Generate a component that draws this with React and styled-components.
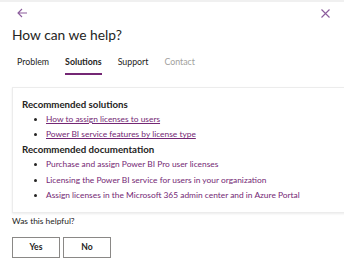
import React from "react"
import styled, { createGlobalStyle } from "styled-components"

const GlobalStyle = createGlobalStyle`
  body {
    margin: 0;
    background: #fff;
    font-family: Lato, "Open Sans", sans-serif;
    color: #252423;
  }
`

const tabs = [
  { label: "Problem" },
  { label: "Solutions", active: true },
  { label: "Support" },
  { label: "Contact", disabled: true },
]

const solutions = [
  "How to assign licenses to users",
  "Power BI service features by license type",
]

const docs = [
  "Purchase and assign Power BI Pro user licenses",
  "Licensing the Power BI service for users in your organization",
  "Assign licenses in the Microsoft 365 admin center and in Azure Portal",
]

const App = () => {
  return (
    <>
      <GlobalStyle />
      <Panel>
        <TopBar>
          <IconButton aria-label="back">
            <svg width="11" height="10" viewBox="0 0 11 10" fill="none">
              <path d="M5 1 L1 5 L5 9 M1 5 H10" stroke="#8b5c9c" strokeWidth="1.1" />
            </svg>
          </IconButton>
          <IconButton aria-label="close">
            <svg width="9" height="9" viewBox="0 0 9 9" fill="none">
              <path d="M0.5 0.5 L8.5 8.5 M8.5 0.5 L0.5 8.5" stroke="#8b5c9c" strokeWidth="1.1" />
            </svg>
          </IconButton>
        </TopBar>
        <Title>How can we help?</Title>
        <Tabs>
          {tabs.map((t) => (
            <Tab key={t.label} $active={t.active} $disabled={t.disabled}>
              {t.label}
            </Tab>
          ))}
        </Tabs>
        <Card>
          <Heading>Recommended solutions</Heading>
          <List>
            {solutions.map((s) => (
              <Item key={s}>
                <Link href="#" $underline>{s}</Link>
              </Item>
            ))}
          </List>
          <Heading>Recommended documentation</Heading>
          <List>
            {docs.map((s) => (
              <Item key={s} $tall>
                <Link href="#">{s}</Link>
              </Item>
            ))}
          </List>
        </Card>
        <Question>Was this helpful?</Question>
        <Buttons>
          <Button>Yes</Button>
          <Button>No</Button>
        </Buttons>
      </Panel>
    </>
  )
}

const Panel = styled.div`
  border-top: 2px solid #f0f0f0;
  padding: 4px 0 0 12px;
  overflow: hidden;
`

const TopBar = styled.div`
  display: flex;
  justify-content: space-between;
  align-items: center;
  padding: 0 14px 0 5px;
  height: 14px;
`

const IconButton = styled.span`
  display: flex;
  align-items: center;
`

const Title = styled.h1`
  margin: 5px 0 0;
  font-size: 13.8px;
  font-weight: 400;
  line-height: 20px;
`

const Tabs = styled.div`
  display: flex;
  gap: 16px;
  margin: 8px 0 0 5px;
`

const Tab = styled.div`
  font-size: 8.8px;
  line-height: 18px;
  padding-bottom: 2px;
  color: ${(p) => (p.$disabled ? "#a19f9d" : "#252423")};
  font-weight: ${(p) => (p.$active ? 700 : 400)};
  border-bottom: 2px solid ${(p) => (p.$active ? "#742774" : "transparent")};
`

const Card = styled.div`
  margin-top: 12px;
  margin-right: -20px;
  padding: 9px 10px 8px 9px;
  border: 1px solid #ececec;
  box-shadow: 0 1px 2px rgba(0, 0, 0, 0.08);
`

const Heading = styled.div`
  font-size: 9.7px;
  font-weight: 700;
  line-height: 15px;
`

const List = styled.ul`
  margin: 0;
  padding-left: 24px;
`

const Item = styled.li`
  line-height: ${(p) => (p.$tall ? "15.5px" : "15px")};
  font-size: 8.4px;

  &::marker {
    color: #252423;
    font-size: 8px;
  }
`

const Link = styled.a`
  color: #742774;
  text-decoration: ${(p) => (p.$underline ? "underline" : "none")};
`

const Question = styled.div`
  margin-top: 1px;
  font-size: 8.4px;
  line-height: 14px;
`

const Buttons = styled.div`
  display: flex;
  gap: 3px;
  margin-top: 9px;
`

const Button = styled.button`
  width: 48px;
  height: 21px;
  background: #fff;
  border: 1px solid #8a8886;
  font-family: inherit;
  font-size: 8.6px;
  font-weight: 700;
  color: #252423;
  padding: 0;
`

export default App
